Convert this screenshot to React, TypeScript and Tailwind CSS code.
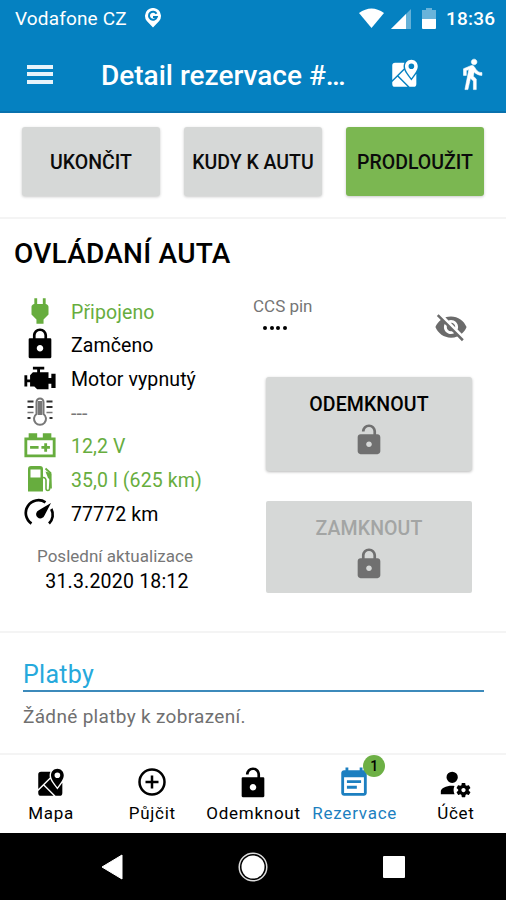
import type { ReactNode } from "react";

const LOCK =
  "M18 8h-1V6c0-2.76-2.24-5-5-5S7 3.24 7 6v2H6c-1.1 0-2 .9-2 2v10c0 1.1.9 2 2 2h12c1.1 0 2-.9 2-2V10c0-1.1-.9-2-2-2zm-6 9c-1.1 0-2-.9-2-2s.9-2 2-2 2 .9 2 2-.9 2-2 2zm3.1-9H8.9V6c0-1.71 1.39-3.1 3.1-3.1 1.71 0 3.1 1.39 3.1 3.1v2z";
const LOCK_SQUARE =
  "M19.200 8h-2.200V6c0-2.76-2.24-5-5-5S7 3.24 7 6v2H4.800q-.8 0-.8.8V21.200q0 .8.8.8H19.200q.8 0 .8-.8V8.800q0-.8-.8-.8zM12 17.300c-1.270 0-2.300-1.030-2.300-2.300s1.030-2.300 2.300-2.300 2.300 1.030 2.300 2.300-1.030 2.300-2.300 2.300zM15.100 8H8.900V6c0-1.71 1.39-3.1 3.1-3.1 1.71 0 3.1 1.39 3.1 3.1v2z";
const UNLOCK =
  "M18 8h-1V6c0-2.76-2.24-5-5-5S7 3.24 7 6h1.9c0-1.71 1.39-3.1 3.1-3.1s3.1 1.39 3.1 3.1v2H6c-1.1 0-2 .9-2 2v10c0 1.1.9 2 2 2h12c1.1 0 2-.9 2-2V10c0-1.1-.9-2-2-2zm-6 9c-1.1 0-2-.9-2-2s.9-2 2-2 2 .9 2 2-.9 2-2 2z";
const UNLOCK_SQUARE =
  "M19.200 8h-2.200V6c0-2.76-2.24-5-5-5S7 3.24 7 6h1.9c0-1.71 1.39-3.1 3.1-3.1s3.1 1.39 3.1 3.1v2H4.800q-.8 0-.8.8V21.200q0 .8.8.8H19.200q.8 0 .8-.8V8.800q0-.8-.8-.8zM12 17.300c-1.270 0-2.300-1.030-2.300-2.300s1.030-2.300 2.300-2.300 2.300 1.030 2.300 2.300-1.030 2.300-2.300 2.300z";
const EYE_OFF =
  "M12 7c2.76 0 5 2.24 5 5 0 .65-.13 1.26-.36 1.83l2.92 2.92c1.51-1.26 2.7-2.89 3.43-4.75-1.73-4.39-6-7.5-11-7.5-1.4 0-2.74.25-3.98.7l2.16 2.16C10.74 7.13 11.35 7 12 7zM2 4.27l2.28 2.28.46.46C3.08 8.3 1.78 10.02 1 12c1.73 4.39 6 7.5 11 7.5 1.55 0 3.03-.3 4.38-.84l.42.42L19.73 22 21 20.73 3.27 3 2 4.27zM7.53 9.8l1.55 1.55c-.05.21-.08.43-.08.65 0 1.66 1.34 3 3 3 .22 0 .44-.03.65-.08l1.55 1.55c-.67.33-1.41.53-2.2.53-2.76 0-5-2.24-5-5 0-.79.2-1.53.53-2.2zm4.31-.78l3.15 3.15.02-.16c0-1.66-1.34-3-3-3l-.17.01z";
const WALK =
  "M13.5 5.5c1.1 0 2-.9 2-2s-.9-2-2-2-2 .9-2 2 .9 2 2 2zM9.8 8.9L7 23h2.1l1.8-8 2.1 2v6h2v-7.5l-2.1-2 .6-3C14.8 12 16.8 13 19 13v-2c-1.9 0-3.5-1-4.3-2.4l-1-1.6c-.4-.6-1-1-1.7-1-.3 0-.5.1-.8.1L6 8.3V13h2V9.6l1.8-.7";
const MAP =
  "M5,4A2,2 0 0,0 3,6V16.29L11.18,8.11C11.06,7.59 11,7.07 11,6.53C11,5.62 11.2,4.76 11.59,4H5M18,21A2,2 0 0,0 20,19V11.86C19.24,13 18.31,14.21 17.29,15.5L16.5,16.5L15.72,15.5C14.39,13.85 13.22,12.32 12.39,10.91C12.05,10.33 11.76,9.76 11.53,9.18L7.46,13.25L15.21,21H18M3,19A2,2 0 0,0 5,21H13.79L6.75,13.96L3,17.71V19M16.5,15C19.11,11.63 21,9.1 21,6.57C21,4.05 19,2 16.5,2C14,2 12,4.05 12,6.57C12,9.1 13.87,11.63 16.5,15M18.5,6.5A2,2 0 0,1 16.5,8.5A2,2 0 0,1 14.5,6.5A2,2 0 0,1 16.5,4.5A2,2 0 0,1 18.5,6.5Z";
const ENGINE =
  "M7,4V6H10V8H7L5,10V13H3V10H1V18H3V15H5V18H8L10,20H18V16H20V19H23V9H20V12H18V8H12V6H15V4H7Z";
const BATTERY =
  "M4,3V6H1V20H23V6H20V3H14V6H10V3H4M3,8H21V18H3V8M15,10V12H13V14H15V16H17V14H19V12H17V10H15M5,12V14H11V12H5Z";
const PLUG =
  "M16,7V3H14V7H10V3H8V7H8C7,7 6,8 6,9V14.5L9.5,18V21H14.5V18L18,14.5V9C18,8 17,7 16,7Z";
const CALENDAR =
  "M17 10H7v2h10v-2zm2-7h-1V1h-2v2H8V1H6v2H5c-1.11 0-1.99.9-1.99 2L3 19c0 1.1.89 2 2 2h14c1.1 0 2-.9 2-2V5c0-1.1-.9-2-2-2zm0 16H5V8h14v11zm-5-5H7v2h7v-2z";
const ACCOUNT =
  "M10 4A4 4 0 0 0 6 8A4 4 0 0 0 10 12A4 4 0 0 0 14 8A4 4 0 0 0 10 4M17 12C16.87 12 16.76 12.09 16.74 12.21L16.55 13.53C16.25 13.66 15.96 13.82 15.7 14L14.46 13.5C14.35 13.5 14.22 13.5 14.15 13.63L13.15 15.36C13.09 15.47 13.11 15.6 13.21 15.68L14.27 16.5C14.25 16.67 14.24 16.83 14.24 17C14.24 17.17 14.25 17.33 14.27 17.5L13.21 18.32C13.12 18.4 13.09 18.53 13.15 18.64L14.15 20.37C14.21 20.5 14.34 20.5 14.46 20.5L15.7 20C15.96 20.18 16.24 20.35 16.55 20.47L16.74 21.79C16.76 21.91 16.86 22 17 22H19C19.11 22 19.22 21.91 19.24 21.79L19.43 20.47C19.73 20.34 20 20.18 20.27 20L21.5 20.5C21.63 20.5 21.76 20.5 21.83 20.37L22.83 18.64C22.89 18.53 22.86 18.4 22.77 18.32L21.7 17.5C21.72 17.33 21.74 17.17 21.74 17C21.74 16.83 21.73 16.67 21.7 16.5L22.76 15.68C22.85 15.6 22.88 15.47 22.82 15.36L21.82 13.63C21.76 13.5 21.63 13.5 21.5 13.5L20.27 14C20 13.82 19.73 13.65 19.42 13.53L19.23 12.21C19.22 12.09 19.11 12 19 12H17M10 14C5.58 14 2 15.79 2 18V20H11.68A7 7 0 0 1 11 17A7 7 0 0 1 11.64 14.09C11.11 14.03 10.56 14 10 14M18 15.5C18.83 15.5 19.5 16.17 19.5 17C19.5 17.83 18.83 18.5 18 18.5C17.16 18.5 16.5 17.83 16.5 17C16.5 16.17 17.17 15.5 18 15.5Z";

function Icon({ d, className = "" }: { d: string; className?: string }) {
  return (
    <svg viewBox="0 0 24 24" fill="currentColor" fillRule="evenodd" className={`size-[34px] shrink-0 ${className}`}>
      <path d={d} />
    </svg>
  );
}

function Thermometer() {
  return (
    <svg viewBox="0 0 34 34" className="size-[34px]" fill="none" stroke="currentColor">
      <path d="M13.5 19V7a3.500 3.500 0 0 1 7 0v12a6 6 0 1 1-7 0z" strokeWidth="2" />
      <path d="M17 6v14" strokeWidth="4.500" />
      <path d="M4.500 6.500h6M4.500 12h6M23.500 6.500h6M23.500 12h6" stroke="#333" strokeWidth="1.800" />
      <path d="M4.500 17.500h6M23.500 17.500h6" strokeWidth="1.400" />
      <path d="M4.500 23h3M26.500 23h3" stroke="#333" strokeWidth="2.200" />
    </svg>
  );
}

function FuelPump() {
  return (
    <svg viewBox="0 0 34 34" className="size-[34px]" fill="currentColor">
      <path fillRule="evenodd" d="M8 4h9a3 3 0 0 1 3 3V29.500H5V7a3 3 0 0 1 3-3zM7.500 7.500v8h10v-8z" />
      <path d="M20 15.500q3.500 0 3 4.500v6.500q0 2 1.800 2t1.800-2L27.500 12" fill="none" stroke="currentColor" strokeWidth="1.600" />
      <path d="M22.500 6.500l5 4.500.5 15.500" fill="none" stroke="currentColor" strokeWidth="1.800" />
      <path d="M22.500 9.500l5 1.500v7l-2.500-2z" />
    </svg>
  );
}

function Gauge() {
  return (
    <svg viewBox="0 0 34 34" className="size-[34px]" fill="none" stroke="currentColor" strokeWidth="2.700">
      <path d="M8.500 27.500A12 12 0 0 1 22.500 6.300" />
      <path d="M28.300 13A12 12 0 0 1 26 27.500" />
      <path d="M28 7L21.500 19.500a4.300 4.300 0 1 1-5.700-5.300z" fill="currentColor" stroke="none" />
    </svg>
  );
}

function PlusCircle() {
  return (
    <svg viewBox="0 0 34 34" className="size-[34px]" fill="none" stroke="currentColor" strokeWidth="2.500">
      <circle cx="17" cy="16" r="12.500" />
      <path d="M17 9.500v13M10.500 16h13" />
    </svg>
  );
}

function StatusBar() {
  return (
    <div className="flex h-9 items-center pl-[15px] pr-[10px]">
      <span className="w-[129px] pt-[2px] text-[19px] tracking-[0.15px]">Vodafone CZ</span>
      <svg viewBox="0 0 18 20" className="-mt-px h-5 w-[18px]">
        <path d="M9 19.500L2.800 13A8 8 0 1 1 15.200 13z" fill="#fff" />
        <path d="M12.500 5.800A4 4 0 1 0 12.800 9H9" fill="none" stroke="#0581c1" strokeWidth="2" />
      </svg>
      <svg viewBox="0 0 80 24" className="-mt-px ml-auto h-6 w-20" fill="#fff">
        <path d="M0 7q12.500-9 25 0L12.500 22z" />
        <path d="M52 3v20H32z" opacity=".38" />
        <path d="M47 8v15H32z" />
        <path d="M63 4h4V2h6v2h4v9H63z" opacity=".4" />
        <path d="M63 13h14v9q0 1-1 1H64q-1 0-1-1z" />
      </svg>
      <span className="ml-[7px] w-[50px] pt-[2px] text-[19px] font-medium tracking-[0.2px]">18:36</span>
    </div>
  );
}

function ActionButton({ children, green = false }: { children: ReactNode; green?: boolean }) {
  return (
    <button
      className={`h-[69px] w-[138px] whitespace-nowrap rounded-[3px] pt-[3px] text-[19.5px] font-medium text-[#0b0b0b] shadow-[0_1px_3px_rgba(0,0,0,0.22)] ${green ? "bg-[#7bb751]" : "bg-[#d6d8d7]"}`}
    >
      {children}
    </button>
  );
}

function StatusRow({ icon, text, tone = "text-black" }: { icon: ReactNode; text: string; tone?: string }) {
  return (
    <li className={`flex h-[33.7px] items-center ${tone}`}>
      {icon}
      <span className="ml-[14px] whitespace-nowrap pt-[3px] text-[19.5px] tracking-[0.1px]">{text}</span>
    </li>
  );
}

function NavItem({ icon, label, tone = "text-black", badge }: { icon: ReactNode; label: string; tone?: string; badge?: string }) {
  return (
    <div className={`flex flex-1 flex-col items-center pt-[11px] ${tone}`}>
      <div className="relative">
        {icon}
        {badge && (
          <span className="absolute -top-[11px] left-[26px] flex size-[22px] items-center justify-center rounded-full bg-[#6db045] text-[14px] font-medium text-black">
            {badge}
          </span>
        )}
      </div>
      <span className="mt-px whitespace-nowrap pl-px text-[17px] leading-6 tracking-[0.75px]">{label}</span>
    </div>
  );
}

export default function App() {
  return (
    <div className="flex h-[900px] w-[506px] flex-col overflow-hidden bg-white font-['Roboto',sans-serif] text-black">
      <header className="h-[113px] border-b-2 border-[#0871ad] bg-[#0581c1] text-white">
        <StatusBar />
        <div className="flex h-[76px] items-center pl-[27px] pr-[17px]">
          <div className="flex w-[26px] flex-col gap-[3.500px]">
            <i className="h-[4px] bg-[#e8f3fa]" />
            <i className="h-[4px] bg-[#e8f3fa]" />
            <i className="h-[4px] bg-[#e8f3fa]" />
          </div>
          <h1 className="ml-[48px] whitespace-nowrap pt-[3px] text-[28px] font-medium">Detail rezervace #…</h1>
          <Icon d={MAP} className="ml-auto" />
          <Icon d={WALK} className="ml-[33px] stroke-current stroke-[0.4]" />
        </div>
      </header>

      <section className="flex h-[106px] justify-between border-b-2 border-[#f4f4f4] pl-[22px] pr-[22px] pt-[14px]">
        <ActionButton>UKONČIT</ActionButton>
        <ActionButton>KUDY K AUTU</ActionButton>
        <ActionButton green>PRODLOUŽIT</ActionButton>
      </section>

      <section className="h-[414px] border-b-2 border-[#f4f4f4] pt-[14px]">
        <h2 className="pl-[14px] text-[28px] font-medium leading-[42px] tracking-[0.25px]">OVLÁDANÍ AUTA</h2>
        <div className="flex pt-[19px]">
          <div className="w-[253px] pl-[23px]">
            <ul>
              <StatusRow icon={<Icon d={PLUG} />} text="Připojeno" tone="text-[#67ad3e]" />
              <StatusRow icon={<Icon d={LOCK_SQUARE} className="-mt-[2px]" />} text="Zamčeno" />
              <StatusRow icon={<Icon d={ENGINE} />} text="Motor vypnutý" />
              <StatusRow icon={<Thermometer />} text="---" tone="text-[#777]" />
              <StatusRow icon={<Icon d={BATTERY} />} text="12,2 V" tone="text-[#67ad3e]" />
              <StatusRow icon={<FuelPump />} text="35,0 l (625 km)" tone="text-[#67ad3e]" />
              <StatusRow icon={<Gauge />} text="77772 km" />
            </ul>
            <div className="w-[184px] pt-[14px] text-center">
              <p className="text-[17px] leading-6 tracking-[0.02px] text-[#777]">Poslední aktualizace</p>
              <p className="pl-[4px] pt-px text-[19.5px] leading-[26px] tracking-[0.2px]">31.3.2020 18:12</p>
            </div>
          </div>
          <div className="w-[253px]">
            <div className="flex h-[83px] justify-between pr-[38px]">
              <div>
                <p className="text-[17px] leading-6 text-[#757575]">CCS pin</p>
                <div className="flex gap-[2.500px] pl-[10px] pt-[8px]">
                  <i className="size-[4px] rounded-full bg-black" />
                  <i className="size-[4px] rounded-full bg-black" />
                  <i className="size-[4px] rounded-full bg-black" />
                  <i className="size-[4px] rounded-full bg-black" />
                </div>
              </div>
              <Icon d={EYE_OFF} className="mt-[16px] text-[#6b6b6b]" />
            </div>
            <button className="ml-[13px] flex h-[94px] w-[206px] flex-col items-center rounded-[3px] bg-[#d6d8d7] pt-[13px] shadow-[0_1px_3px_rgba(0,0,0,0.28)]">
              <span className="text-[19.5px] font-medium leading-[30px] tracking-[0.1px]">ODEMKNOUT</span>
              <Icon d={UNLOCK} className="mt-[3px] text-[#707070]" />
            </button>
            <button className="ml-[13px] mt-[30px] flex h-[92px] w-[206px] flex-col items-center rounded-[2px] bg-[#d6d8d7] pt-[13px]">
              <span className="text-[19.5px] font-medium leading-[30px] tracking-[0.1px] text-[#a3a5a4]">ZAMKNOUT</span>
              <Icon d={LOCK} className="mt-[3px] text-[#707070]" />
            </button>
          </div>
        </div>
      </section>

      <section className="h-[120px] pl-[23px] pr-[22px] pt-[25px]">
        <h3 className="h-[34px] border-b-2 border-[#3c8abb] text-[25px] leading-[34px] tracking-[0.3px] text-[#26a9dc]">Platby</h3>
        <p className="pt-[11px] text-[19px] leading-7 tracking-[0.32px] text-[#707070]">Žádné platby k zobrazení.</p>
      </section>

      <nav className="flex h-[80px] border-t-2 border-[#f4f4f4]">
        <NavItem icon={<Icon d={MAP} />} label="Mapa" />
        <NavItem icon={<PlusCircle />} label="Půjčit" />
        <NavItem icon={<Icon d={UNLOCK_SQUARE} />} label="Odemknout" />
        <NavItem icon={<Icon d={CALENDAR} />} label="Rezervace" tone="text-[#1c7fc0]" badge="1" />
        <NavItem icon={<Icon d={ACCOUNT} />} label="Účet" />
      </nav>

      <footer className="flex h-[67px] items-center justify-center gap-[115px] bg-black">
        <svg viewBox="0 0 22 26" className="h-[26px] w-[22px]" fill="#fff">
          <path d="M1 13L21 1v24z" stroke="#fff" strokeLinejoin="round" />
        </svg>
        <svg viewBox="0 0 30 30" className="size-[30px]">
          <circle cx="15" cy="15" r="13.800" fill="none" stroke="#ddd" strokeWidth="1.500" />
          <circle cx="15" cy="15" r="11.500" fill="#fff" />
        </svg>
        <i className="size-[22px] rounded-[1px] bg-white" />
      </footer>
    </div>
  );
}
